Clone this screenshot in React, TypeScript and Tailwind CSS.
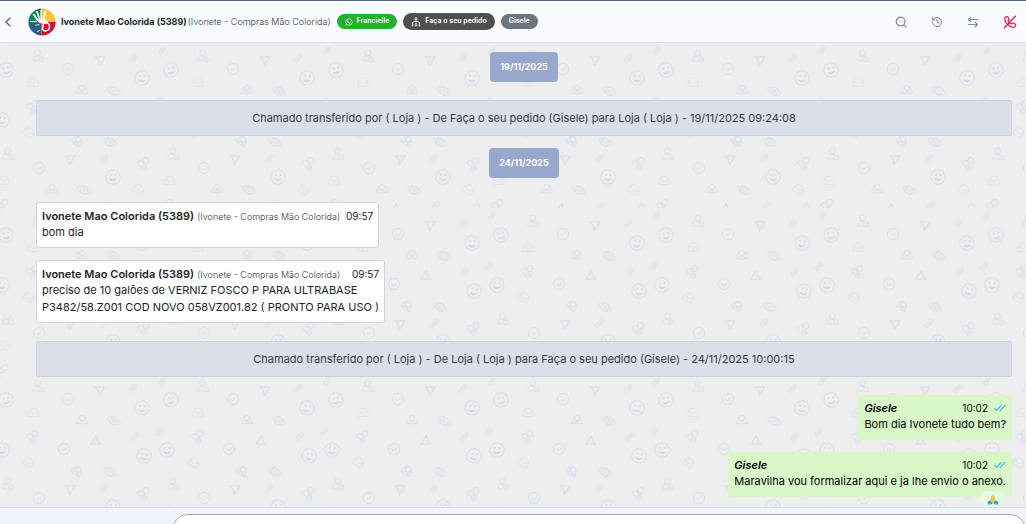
import type { ReactNode } from 'react';
import { ChevronLeft, History } from 'lucide-react';
import { FaWhatsapp } from 'react-icons/fa';

const TILE = 165;

type GlyphName = 'clip' | 'user' | 'send' | 'check' | 'smile' | 'inbox' | 'users' | 'eye';

interface Doodle {
  glyph: GlyphName;
  x: number;
  y: number;
  rotate?: number;
}

// every glyph is drawn around its own centre
const GLYPHS: Record<GlyphName, ReactNode> = {
  clip: (
    <path
      d="M-4 2.2 0-2.8c1.6-1.6 4.6-.2 3.6 2L.4 3.4C-1 4.8-4.4 4.6-4 2.2ZM-2 2.2 1.2-1.6c.8-.6 1.4.2 1 .8L-.6 2.4"
      strokeWidth=".9"
    />
  ),
  user: (
    <>
      <circle cx="-.4" cy="-3" r="3" />
      <path d="M-.5 5h-4.5c-.6-3 1-5 3-5h3.5" />
      <circle cx="3.2" cy="3.4" r="2.6" />
      <path d="m2.2 2.4 2 2m0-2-2 2" strokeWidth=".7" />
    </>
  ),
  send: <path d="M-5-4.2H5L-.6 4.6-1.6-.6Z" strokeWidth="1.3" />,
  check: (
    <>
      <circle r="5.6" />
      <path d="m-2.6 0 2 2 3.4-3.6" />
    </>
  ),
  smile: (
    <>
      <circle r="7.2" strokeWidth="1.1" />
      <circle cx="-2.5" cy="-1.6" r="1" fill="#d5daeb" stroke="none" />
      <circle cx="2" cy="-2.6" r="1" fill="#d5daeb" stroke="none" />
      <path d="M-3.4 2.2C-1.2 2.6 2 2 4 .4 4 4-1.4 6-3.4 2.2Z" fill="#d5daeb" stroke="none" />
    </>
  ),
  inbox: (
    <path d="M-5 4.4V-.4l2.4-3.4h5.2L5-.4v4.8ZM-5-.2h2.6c.6 2.4 4.2 2.4 4.8 0H5" strokeWidth=".7" />
  ),
  users: (
    <>
      <circle cx="0" cy="-2" r="2.6" />
      <path d="M-3.2 3.8C-3 .4 3 .4 3.2 3.8ZM-2.4-2.8c-2-.4-2.8 2-1.2 2.8-1.4.6-1.8 2-1.8 3.4h2.2M2.4-2.8c2-.4 2.8 2 1.2 2.8 1.4.6 1.8 2 1.8 3.4H3.2" />
    </>
  ),
  eye: (
    <g transform="rotate(25)" strokeWidth=".9">
      <path d="M-7 0C-4-5 4-5 7 0 4 5-4 5-7 0Z" />
      <circle r="3.6" />
      <circle r="1.3" />
    </g>
  ),
};

const DOODLES: Doodle[] = [
  { glyph: 'clip', x: 162, y: 7, rotate: -12 },
  { glyph: 'user', x: 38, y: 13 },
  { glyph: 'send', x: 100, y: 18 },
  { glyph: 'clip', x: 133, y: 15 },
  { glyph: 'check', x: 68, y: 26 },
  { glyph: 'smile', x: 6, y: 27 },
  { glyph: 'smile', x: 142, y: 35, rotate: 20 },
  { glyph: 'inbox', x: 33, y: 39 },
  { glyph: 'users', x: 82, y: 47 },
  { glyph: 'eye', x: 114, y: 48 },
  { glyph: 'clip', x: 159, y: 58 },
  { glyph: 'user', x: 33, y: 63, rotate: 45 },
  { glyph: 'clip', x: 135, y: 63 },
  { glyph: 'send', x: 96, y: 67, rotate: 180 },
  { glyph: 'check', x: 64, y: 76, rotate: 20 },
  { glyph: 'smile', x: 2, y: 77, rotate: 15 },
  { glyph: 'smile', x: 144, y: 83, rotate: 25 },
  { glyph: 'inbox', x: 29, y: 89, rotate: 30 },
  { glyph: 'users', x: 77, y: 98, rotate: 35 },
  { glyph: 'eye', x: 110, y: 99 },
  { glyph: 'user', x: 8, y: 111 },
  { glyph: 'clip', x: 104, y: 115 },
  { glyph: 'send', x: 70, y: 117 },
  { glyph: 'user', x: 144, y: 120, rotate: 45 },
  { glyph: 'check', x: 39, y: 125 },
  { glyph: 'smile', x: 113, y: 134, rotate: 15 },
  { glyph: 'inbox', x: 4, y: 137 },
  { glyph: 'users', x: 52, y: 146 },
  { glyph: 'inbox', x: 139, y: 146, rotate: 35 },
  { glyph: 'eye', x: 84, y: 147 },
  { glyph: 'user', x: 3, y: 162, rotate: 45 },
  { glyph: 'clip', x: 106, y: 162 },
  { glyph: 'send', x: 66, y: 165, rotate: 180 },
  { glyph: 'user', x: 147, y: 167 },
];

function Wallpaper() {
  return (
    <svg className="absolute inset-0 h-full w-full" aria-hidden="true">
      <defs>
        <pattern id="doodles" width={TILE} height={TILE} patternUnits="userSpaceOnUse">
          <g fill="none" stroke="#dbdfeb" strokeWidth="1" strokeLinejoin="round">
            {/* neighbours on both sides so that glyphs continue over the seam */}
            {[-TILE, 0, TILE].map((shift) =>
              DOODLES.map((d, i) => (
                <g
                  key={`${shift}-${i}`}
                  transform={`translate(${d.x + shift} ${d.y}) rotate(${d.rotate ?? 0})`}
                >
                  {GLYPHS[d.glyph]}
                </g>
              )),
            )}
          </g>
        </pattern>
      </defs>
      <rect width="100%" height="100%" fill="url(#doodles)" />
    </svg>
  );
}

function Avatar() {
  return (
    <svg viewBox="0 0 28 28" className="size-7 shrink-0" role="img" aria-label="Mão Colorida">
      <defs>
        <clipPath id="disc">
          <circle cx="14" cy="14" r="13.6" />
        </clipPath>
      </defs>
      <g clipPath="url(#disc)">
        <path d="M0 0h13.5v14H0Z" fill="#0b8457" />
        <path d="M13.5 0H28v14H13.5Z" fill="#fbc737" />
        <path d="M0 14h13.5v14H0Z" fill="#2a6286" />
        <path d="M13.5 14H28v14H13.5Z" fill="#d80b32" />
        <g stroke="#fff" strokeLinecap="round" fill="none" strokeWidth="1.7">
          <path d="M5.6 6.4 9.6 12M9 3.6 11.4 11M13.2 2.6V11M17.4 3.4 15.8 11" />
          <path d="M2.4 13.6h6" strokeWidth="1" />
        </g>
        <path d="M9.2 11.4h8l3.2 2.8-3 1.6-3.6-.4-3.2-1Z" fill="#fff" />
        <path
          d="M15.4 15.6c2.4-2 6.2-.6 6.2 2.8 0 3-2.6 5.2-5 4.4M15.4 15.6l-1 5.8 2.2 1.4"
          fill="none"
          stroke="#fff"
          strokeWidth="1.5"
          strokeLinecap="round"
        />
        <path d="M7.6 17.2l3.4-.6M9.4 23.6l2.2-1.2" stroke="#dbe6ee" strokeWidth=".9" strokeLinecap="round" />
      </g>
    </svg>
  );
}

function SearchIcon() {
  return (
    <svg viewBox="0 0 12 12" className="size-3" fill="none" stroke="currentColor" strokeLinecap="round">
      <circle cx="5.6" cy="5.6" r="4.4" strokeWidth="1.2" />
      <path d="m9.2 9.4 1.8 1.4" strokeWidth="1.2" />
    </svg>
  );
}

function TransferIcon() {
  return (
    <svg viewBox="0 0 12 12" className="size-3" fill="none" stroke="currentColor" strokeWidth="1.2" strokeLinejoin="round">
      <path d="M11 3.5H1.5M4 1 1.5 3.5 4 6M1 8.5h9.5M8 6l2.5 2.5L8 11" />
    </svg>
  );
}

function HangUpIcon() {
  return (
    <svg
      viewBox="0 0 14 14"
      className="size-3.5"
      fill="none"
      stroke="currentColor"
      strokeWidth="1.3"
      strokeLinecap="round"
      strokeLinejoin="round"
    >
      <path d="M2 2.6C3 1.4 4.600 1.200 5.200 2.400l.8 1.800c.2 1-1 1.200-.8 2 .4 1.200 1.400 2.200 2.600 2.600.8.2 1-1 2-.8l2 .8c1.200.6 1 2.200-.2 3.200-2 1-4.800-.2-6.800-2.200S1.200 4.600 2 2.600Z" />
      <path d="M12.4 1.2 1.4 12.8" />
    </svg>
  );
}

function SectorIcon() {
  return (
    <svg viewBox="0 0 10 10" className="size-[10px]" fill="none" stroke="currentColor" strokeWidth=".9">
      <circle cx="5" cy="1.8" r="1.1" />
      <path d="M5 3v4.6M1.6 7.4V5.6L3.4 4.4h3.2l1.8 1.2v1.8" />
      <path d="M.8 8.4h1.6M4.2 8.4h1.6M7.6 8.4h1.6" strokeWidth="1.6" />
    </svg>
  );
}

function DoubleCheck() {
  return (
    <svg
      viewBox="0 0 12 8"
      className="h-2 w-3"
      fill="none"
      stroke="#53bdeb"
      strokeWidth="1.3"
      role="img"
      aria-label="Lida"
    >
      <path d="m.6 4.4 2 2L7.4 1.2M5.6 6.2l.6.4 5-5.4" />
    </svg>
  );
}

function PrayingHands() {
  return (
    <svg viewBox="0 0 12 12" className="size-3" role="img" aria-label="Mãos em prece">
      <path d="M5.8.8 3.6 5.4 3 8.6l2.8 1.8ZM6.2.8l2.2 4.6.6 3.2-2.8 1.8Z" fill="#ffc83d" />
      <path d="M6 3v6.5" stroke="#e8a317" strokeWidth=".5" />
      <path d="m.6 8.8 2.6-1.4L5.6 10l-1.4 1.6H.8ZM11.4 8.8 8.8 7.4 6.4 10l1.4 1.6h3.4Z" fill="#3f9fd8" />
    </svg>
  );
}

function DateChip({ children }: { children: ReactNode }) {
  return (
    <div className="flex h-[30px] items-center self-center rounded-[4px] bg-[#98a8cd] px-[10px] text-[9px] font-bold text-white">
      {children}
    </div>
  );
}

function TransferNotice({ children }: { children: ReactNode }) {
  return (
    <div className="flex min-h-9 items-center justify-center rounded-[2px] border border-[#cbd2e3] bg-[#dbdfe8] text-[11px] leading-4 text-[#343a46]">
      {children}
    </div>
  );
}

interface IncomingProps {
  time: string;
  children: ReactNode;
}

function IncomingMessage({ time, children }: IncomingProps) {
  return (
    <article className="self-start rounded-[3px] border border-[#cfd4e2] bg-white px-[5px] pt-[5px] pb-[6px] text-[11px] leading-[17px] text-[#212529]">
      <header className="flex h-4 items-center">
        <strong className="font-semibold">Ivonete Mao Colorida (5389)</strong>
        <span className="ml-[3px] text-[9px] font-light text-[#343a46]">(Ivonete - Compras Mão Colorida)</span>
        <time className="ml-auto pl-[6px] text-[10px]">{time}</time>
      </header>
      <p>{children}</p>
    </article>
  );
}

interface OutgoingProps {
  time: string;
  reaction?: ReactNode;
  children: ReactNode;
}

function OutgoingMessage({ time, reaction, children }: OutgoingProps) {
  return (
    <article className="relative self-end rounded-[2px] bg-[#d9f8c8] px-[6px] pt-[5px] pb-2 text-[11px] leading-4 text-black">
      <header className="flex items-center">
        <strong className="font-semibold italic">Gisele</strong>
        <time className="ml-auto pr-[6px] text-[10px]">{time}</time>
        <DoubleCheck />
      </header>
      <p>{children}</p>
      {reaction && (
        <span className="absolute right-[7px] -bottom-[10px] flex h-4 w-[25px] items-center justify-center rounded-full bg-[#e4fbe3]">
          {reaction}
        </span>
      )}
    </article>
  );
}

export default function App() {
  return (
    <div className="flex h-screen flex-col overflow-hidden bg-[#f0f4fd] font-['Inter','Liberation_Sans',sans-serif]">
      <header className="flex h-[43px] shrink-0 items-center border-t border-b border-t-[#53639a] border-b-[#dfe3ee] bg-[#fafbff] pr-[9px]">
        <button type="button" aria-label="Voltar" className="text-[#53639a]">
          <ChevronLeft className="size-4" strokeWidth={2} />
        </button>
        <div className="ml-3 flex items-center">
          <Avatar />
          <h1 className="ml-[5px] text-[9px] font-bold text-[#212529]">Ivonete Mao Colorida (5389)</h1>
          <span className="ml-px text-[9px] font-light text-[#343a46]">(Ivonete - Compras Mão Colorida)</span>
        </div>
        <div className="ml-[6px] flex items-center gap-[6px] text-[7px] font-semibold text-white">
          <span className="flex h-[15px] items-center gap-1 rounded-full bg-[#22b12f] px-2">
            <FaWhatsapp className="size-2" />
            Francielle
          </span>
          <span className="flex h-[17px] items-center gap-1 rounded-full bg-[#4f4f4f] px-2">
            <SectorIcon />
            Faça o seu pedido
          </span>
          <span className="flex h-[15px] items-center rounded-full bg-[#6c757d] px-2">Gisele</span>
        </div>
        <div className="ml-auto flex items-center gap-6 text-[#8089a0]">
          <button type="button" aria-label="Pesquisar">
            <SearchIcon />
          </button>
          <button type="button" aria-label="Histórico">
            <History className="size-3" strokeWidth={2} />
          </button>
          <button type="button" aria-label="Transferir">
            <TransferIcon />
          </button>
          <button type="button" aria-label="Encerrar" className="text-[#dc2453]">
            <HangUpIcon />
          </button>
        </div>
      </header>

      <main className="relative shrink-0 bg-[#eeeeee]">
        <Wallpaper />
        <div className="relative flex flex-col gap-3 pt-[9px] pr-[14px] pb-[10px] pl-9">
          <DateChip>19/11/2025</DateChip>
          <div className="mt-[6px]">
            <TransferNotice>
              Chamado transferido por ( Loja ) - De Faça o seu pedido (Gisele) para Loja ( Loja ) - 19/11/2025 09:24:08
            </TransferNotice>
          </div>
          <DateChip>24/11/2025</DateChip>
          <section className="mt-3 flex flex-col gap-3">
            <IncomingMessage time="09:57">bom dia</IncomingMessage>
            <IncomingMessage time="09:57">
              preciso de 10 galões de VERNIZ FOSCO P PARA ULTRABASE
              <br />
              P3482/58.Z001 COD NOVO 058VZ001.82 ( PRONTO PARA USO )
            </IncomingMessage>
          </section>
          <div className="my-[6px]">
            <TransferNotice>
              Chamado transferido por ( Loja ) - De Loja ( Loja ) para Faça o seu pedido (Gisele) - 24/11/2025 10:00:15
            </TransferNotice>
          </div>
          <OutgoingMessage time="10:02">Bom dia Ivonete tudo bem?</OutgoingMessage>
          <OutgoingMessage time="10:02" reaction={<PrayingHands />}>
            Maravilha vou formalizar aqui e ja lhe envio o anexo.
          </OutgoingMessage>
        </div>
      </main>

      <footer className="shrink-0 border-t border-[#d5dbea] pt-[6px] pb-3 pl-[172px]">
        <textarea
          aria-label="Mensagem"
          className="block h-10 w-full resize-none rounded-[16px] border border-[#a3a9b6] bg-white px-4 py-2 text-[11px] outline-none"
        />
      </footer>
    </div>
  );
}
